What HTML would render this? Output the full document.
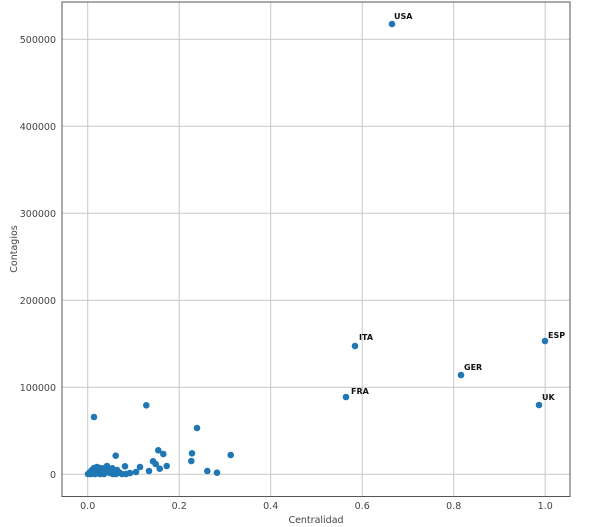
<!DOCTYPE html>
<html><head><style>body{margin:0;background:#fff}svg{display:block}text{font-family:"DejaVu Sans","Liberation Sans",sans-serif}</style></head><body>
<svg width="600" height="527" viewBox="0 0 600 527">
<g stroke="#c8c8c8" stroke-width="1">
<line x1="87.7" y1="2" x2="87.7" y2="496.5"/><line x1="179.2" y1="2" x2="179.2" y2="496.5"/><line x1="270.7" y1="2" x2="270.7" y2="496.5"/><line x1="362.2" y1="2" x2="362.2" y2="496.5"/><line x1="453.7" y1="2" x2="453.7" y2="496.5"/><line x1="545.2" y1="2" x2="545.2" y2="496.5"/>
<line x1="62" y1="474.3" x2="570" y2="474.3"/><line x1="62" y1="387.3" x2="570" y2="387.3"/><line x1="62" y1="300.3" x2="570" y2="300.3"/><line x1="62" y1="213.3" x2="570" y2="213.3"/><line x1="62" y1="126.3" x2="570" y2="126.3"/><line x1="62" y1="39.3" x2="570" y2="39.3"/>
</g>
<rect x="62" y="2" width="508" height="494.5" fill="none" stroke="#555" stroke-width="1"/>
<g fill="#1f77b4">
<circle cx="392" cy="24" r="3.3"/><circle cx="355" cy="346" r="3.3"/><circle cx="545" cy="341" r="3.3"/><circle cx="461" cy="375" r="3.3"/><circle cx="346" cy="397" r="3.3"/><circle cx="539" cy="405" r="3.3"/>
<circle cx="94" cy="417" r="3.3"/><circle cx="146.3" cy="405.3" r="3.3"/><circle cx="197" cy="428" r="3.3"/><circle cx="115.7" cy="455.7" r="3.3"/><circle cx="158.3" cy="450.3" r="3.3"/><circle cx="163.3" cy="454" r="3.3"/><circle cx="192" cy="453.3" r="3.3"/><circle cx="191.3" cy="461" r="3.3"/><circle cx="230.7" cy="455" r="3.3"/><circle cx="207.3" cy="471" r="3.3"/><circle cx="217" cy="472.7" r="3.3"/><circle cx="153" cy="461.3" r="3.3"/><circle cx="155.7" cy="464" r="3.3"/><circle cx="159.7" cy="468.7" r="3.3"/><circle cx="166.7" cy="466" r="3.3"/><circle cx="149" cy="471" r="3.3"/><circle cx="140" cy="467" r="3.3"/><circle cx="136" cy="472" r="3.3"/><circle cx="125" cy="466.3" r="3.3"/><circle cx="112.3" cy="468.3" r="3.3"/><circle cx="108" cy="469.3" r="3.3"/><circle cx="104.3" cy="468" r="3.3"/><circle cx="130" cy="473" r="3.3"/><circle cx="100" cy="474" r="3.3"/><circle cx="96" cy="473.3" r="3.3"/><circle cx="119.7" cy="472.7" r="3.3"/><circle cx="117" cy="470" r="3.3"/>
<circle cx="88" cy="474" r="3.3"/><circle cx="90" cy="472" r="3.3"/><circle cx="92" cy="470" r="3.3"/><circle cx="94" cy="468" r="3.3"/><circle cx="96" cy="469" r="3.3"/><circle cx="98" cy="471" r="3.3"/><circle cx="91" cy="474" r="3.3"/><circle cx="95" cy="474" r="3.3"/><circle cx="102" cy="472" r="3.3"/><circle cx="104" cy="474" r="3.3"/><circle cx="106" cy="472" r="3.3"/><circle cx="107" cy="466" r="3.3"/><circle cx="110" cy="473" r="3.3"/><circle cx="113" cy="474" r="3.3"/><circle cx="100" cy="468" r="3.3"/><circle cx="93" cy="472" r="3.3"/><circle cx="97" cy="467" r="3.3"/><circle cx="122" cy="474" r="3.3"/><circle cx="126" cy="474" r="3.3"/><circle cx="116" cy="474" r="3.3"/><circle cx="109" cy="471" r="3.3"/>
</g>
<g font-size="8" font-weight="bold" fill="#111">
<text x="394" y="19">USA</text><text x="359" y="340">ITA</text><text x="548" y="338">ESP</text><text x="464" y="370">GER</text><text x="351" y="394">FRA</text><text x="542" y="400">UK</text>
</g>
<g font-size="9.5" fill="#444" text-anchor="end">
<text x="56" y="478">0</text><text x="56" y="391">100000</text><text x="56" y="304">200000</text><text x="56" y="217">300000</text><text x="56" y="130">400000</text><text x="56" y="43">500000</text>
</g>
<g font-size="9.5" fill="#444" text-anchor="middle">
<text x="87.7" y="509">0.0</text><text x="179.2" y="509">0.2</text><text x="270.7" y="509">0.4</text><text x="362.2" y="509">0.6</text><text x="453.7" y="509">0.8</text><text x="545.2" y="509">1.0</text>
<text x="316" y="523">Centralidad</text>
<text transform="translate(17,249) rotate(-90)">Contagios</text>
</g>
</svg>
</body></html>
